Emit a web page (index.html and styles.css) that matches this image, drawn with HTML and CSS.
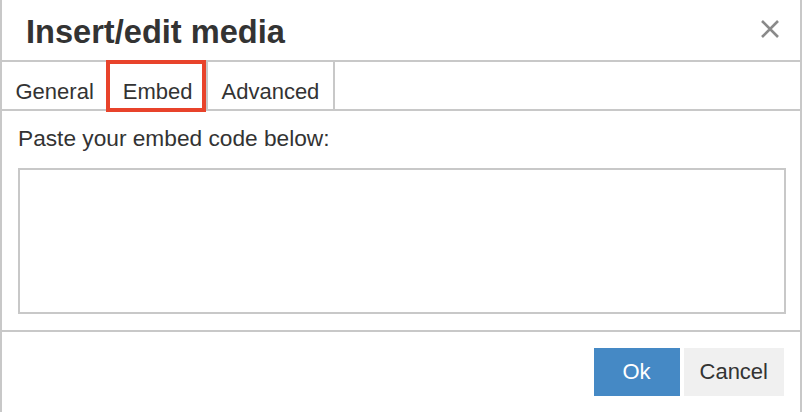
FILE: index.html
```html
<!DOCTYPE html>
<html lang="en">
<head>
  <meta charset="UTF-8">
  <meta name="viewport" content="width=device-width, initial-scale=1.0">
  <title>Insert/edit media</title>
  <link rel="stylesheet" href="styles.css">
</head>
<body>
  <div class="dialog">
    <div class="dialog-head">
      <h1 class="dialog-title">Insert/edit media</h1>
      <button class="close" aria-label="Close">
        <svg width="20" height="20" viewBox="0 0 20 20">
          <path d="M2 2 L18 18 M18 2 L2 18" stroke="#8a8a8a" stroke-width="2.6" fill="none"/>
        </svg>
      </button>
    </div>
    <div class="tabs">
      <div class="tab">General</div>
      <div class="tab active">Embed</div>
      <div class="tab">Advanced</div>
    </div>
    <div class="dialog-body">
      <label class="field-label" for="embed">Paste your embed code below:</label>
      <textarea id="embed" class="embed-code"></textarea>
    </div>
    <div class="dialog-foot">
      <button class="btn btn-primary">Ok</button>
      <button class="btn">Cancel</button>
    </div>
  </div>
</body>
</html>
```

FILE: styles.css
```css
body {
  margin: 0;
  font-family: "Liberation Sans", Arial, sans-serif;
  font-size: 22px;
  color: #333;
  background-color: #fff;
}
.dialog {
  width: 798px;
  height: 412px;
  border-left: 2px solid #c8c8c8;
  border-right: 2px solid #c8c8c8;
  display: flex;
  flex-direction: column;
}
.dialog-head {
  height: 60px;
  border-bottom: 2px solid #c8c8c8;
  display: flex;
  align-items: center;
  justify-content: space-between;
  padding: 0 20px 0 24px;
}
.dialog-title {
  margin: 0;
  padding-top: 3px;
  font-size: 32.6px;
  font-weight: bold;
  color: #333;
}
.close {
  border: none;
  background: none;
  padding: 0;
  width: 20px;
  height: 20px;
  margin-bottom: 2px;
}
.tabs {
  display: flex;
  height: 47px;
  border-bottom: 2px solid #c8c8c8;
}
.tab {
  padding: 17px 13.5px 5px;
  line-height: 25px;
  border-right: 2px solid #c8c8c8;
}
.tab.active {
  position: relative;
}
.tab.active::after {
  content: "";
  position: absolute;
  left: -3px;
  right: 0;
  top: -2px;
  bottom: -3px;
  border: 4px solid #e8432b;
}
.dialog-body {
  padding: 15px 16px 16px;
  display: flex;
  flex-direction: column;
}
.field-label {
  font-size: 22.7px;
  line-height: 25px;
  margin-bottom: 17px;
}
.embed-code {
  box-sizing: border-box;
  width: 768px;
  height: 146px;
  border: 2px solid #c8c8c8;
  resize: none;
  margin: 0;
}
.dialog-foot {
  border-top: 2px solid #c8c8c8;
  padding: 16px;
  display: flex;
  justify-content: flex-end;
  gap: 4px;
}
.btn {
  height: 48px;
  border: none;
  padding: 0 16px;
  font-family: inherit;
  font-size: 22px;
  color: #333;
  background-color: #f0f0f0;
  min-width: 100px;
}
.btn-primary {
  min-width: 86px;
  background-color: #4589c5;
  color: #fff;
}
```
